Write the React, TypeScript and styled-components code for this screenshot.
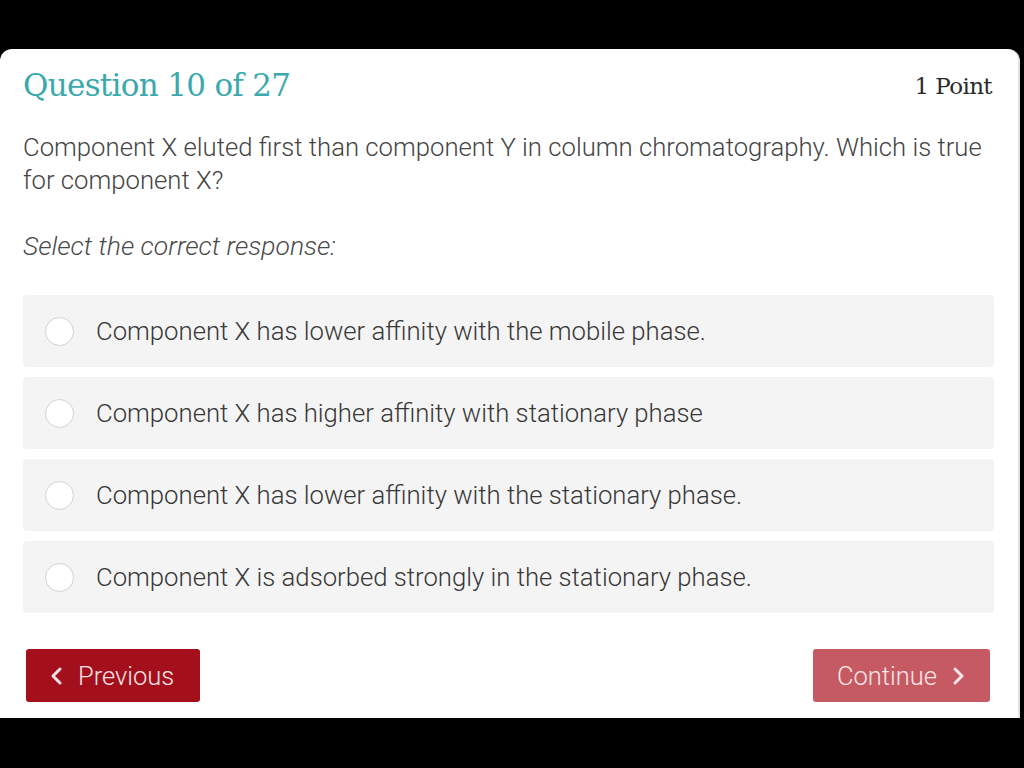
import React from "react";
import styled, { createGlobalStyle } from "styled-components";

const GlobalStyle = createGlobalStyle`
  html, body {
    margin: 0;
    padding: 0;
    background: #000;
  }
  body {
    font-family: Roboto, "Liberation Sans", sans-serif;
  }
`;

const Screen = styled.div`
  width: 1024px;
  height: 768px;
  padding-top: 49px;
  box-sizing: border-box;
  background: #000;
`;

const Card = styled.div`
  width: 1020px;
  height: 669px;
  box-sizing: border-box;
  background: #fff;
  border-radius: 12px 12px 0 0;
  border-right: 2px solid #e2e2e2;
  padding: 18px 28px 0 23px;
  display: flex;
  flex-direction: column;
`;

const Header = styled.div`
  display: flex;
  justify-content: space-between;
  align-items: baseline;
`;

const Title = styled.h1`
  margin: 0;
  font-family: "DejaVu Serif", serif;
  font-weight: normal;
  font-size: 31px;
  letter-spacing: -0.7px;
  color: #3aa9ae;
`;

const Points = styled.span`
  font-family: "DejaVu Serif", serif;
  font-size: 23px;
  letter-spacing: -0.6px;
  color: #2b2b2b;
  margin-right: -2px;
  position: relative;
  top: -2px;
`;

const Question = styled.p`
  margin: 28px 0 0;
  font-size: 25.7px;
  line-height: 33px;
  color: #454545;
  font-weight: 300;
`;

const Prompt = styled.p`
  margin: 33px 0 0;
  font-size: 26.5px;
  font-style: italic;
  font-weight: 300;
  color: #4a4a4a;
`;

const Options = styled.div`
  margin-top: 34px;
  display: flex;
  flex-direction: column;
  gap: 10px;
  width: 971px;
`;

const Option = styled.label`
  height: 72px;
  display: flex;
  align-items: center;
  background: #f4f4f4;
  border-radius: 4px;
  padding-left: 22px;
  font-size: 25.7px;
  font-weight: 300;
  color: #383838;
  cursor: pointer;
`;

const Radio = styled.span`
  width: 27px;
  height: 27px;
  border-radius: 50%;
  border: 1.5px solid #d2d2d2;
  background: #fff;
  margin-right: 22px;
  flex-shrink: 0;
`;

const Footer = styled.div`
  margin-top: 36px;
  display: flex;
  justify-content: space-between;
  padding-left: 3px;
  width: 967px;
  box-sizing: border-box;
`;

const NavButton = styled.button<{ $muted?: boolean }>`
  height: 53px;
  display: flex;
  align-items: center;
  gap: 14px;
  border: none;
  border-radius: 3px;
  background: ${(p) => (p.$muted ? "#c65a63" : "#a3101c")};
  color: ${(p) => (p.$muted ? "#fbe6e8" : "#fbe3e5")};
  font-family: Roboto, "Liberation Sans", sans-serif;
  font-size: 25.5px;
  font-weight: 300;
  padding: ${(p) => (p.$muted ? "0 25px 0 24px" : "0 26px 0 24px")};
  cursor: pointer;
`;

const Chevron = ({ dir }: { dir: "left" | "right" }) => (
  <svg width="14" height="20" viewBox="0 0 14 20" fill="none">
    <path
      d={dir === "left" ? "M10 3 L3 10 L10 17" : "M4 3 L11 10 L4 17"}
      stroke="currentColor"
      strokeWidth="3"
      strokeLinecap="round"
      strokeLinejoin="round"
    />
  </svg>
);

const answers = [
  "Component X has lower affinity with the mobile phase.",
  "Component X has higher affinity with stationary phase",
  "Component X has lower affinity with the stationary phase.",
  "Component X is adsorbed strongly in the stationary phase.",
];

export default function App() {
  return (
    <Screen>
      <GlobalStyle />
      <Card>
        <Header>
          <Title>Question 10 of 27</Title>
          <Points>1 Point</Points>
        </Header>
        <Question>
          Component X eluted first than component Y in column chromatography. Which is true
          for component X?
        </Question>
        <Prompt>Select the correct response:</Prompt>
        <Options>
          {answers.map((a) => (
            <Option key={a}>
              <Radio />
              {a}
            </Option>
          ))}
        </Options>
        <Footer>
          <NavButton>
            <Chevron dir="left" />
            Previous
          </NavButton>
          <NavButton $muted>
            Continue
            <Chevron dir="right" />
          </NavButton>
        </Footer>
      </Card>
    </Screen>
  );
}
